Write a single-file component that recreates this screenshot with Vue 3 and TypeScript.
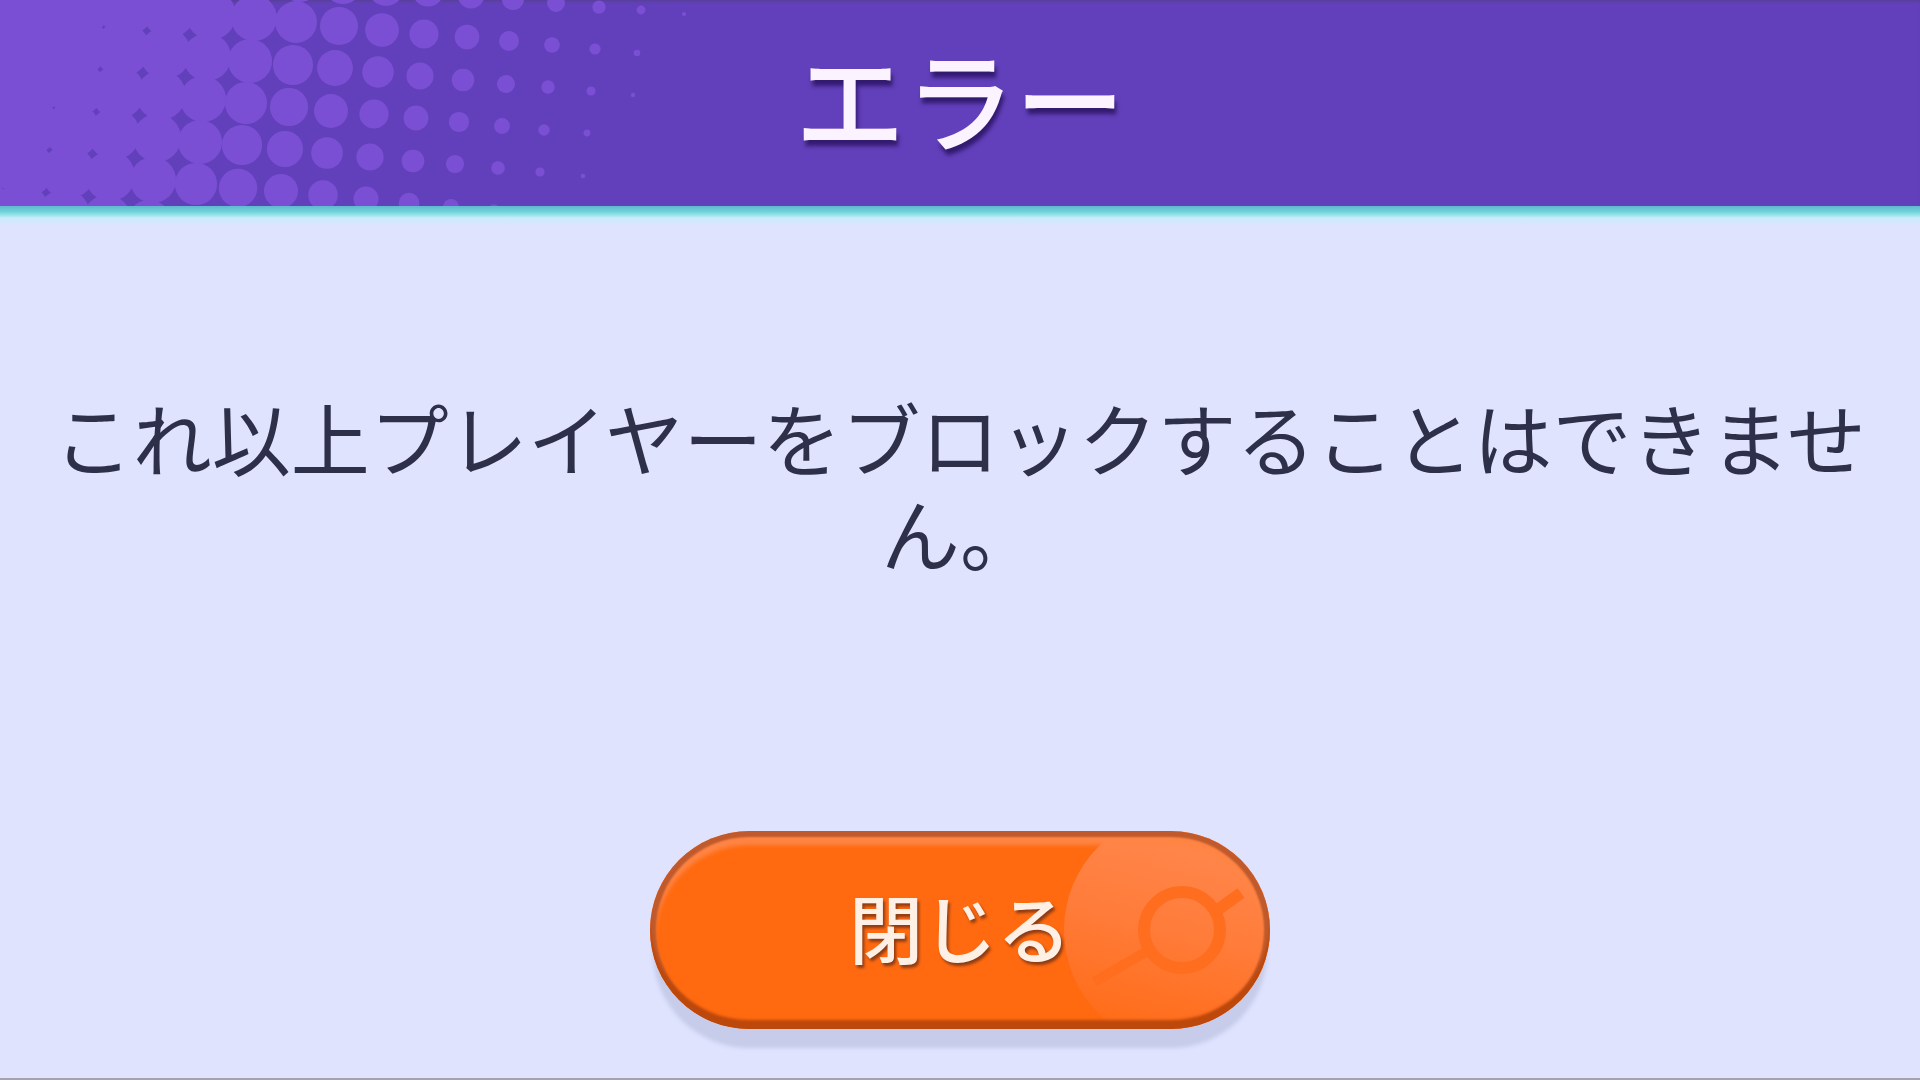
<script setup lang="ts">
import { ref } from 'vue'

interface Dot {
  x: number
  y: number
  r: number
}

const open = ref(true)

// Halftone: a slightly rotated square lattice whose dots shrink towards the right.
const dots: Dot[] = []
for (let j = -2; j <= 5; j++) {
  for (let i = -9; i <= 8; i++) {
    const x = 339 + i * 42.6 - j * 3.9
    const y = 26 + i * 3.8 + j * 42.3
    const t = x + 0.6 * y
    const r = t < 355 ? Math.min(32, 19 + (355 - t) * 0.043) : 19 - (t - 355) * 0.05
    if (r > 2) dots.push({ x: Math.round(x), y: Math.round(y), r: Math.round(r * 10) / 10 })
  }
}
</script>

<template>
  <main v-if="open" class="dialog" role="alertdialog" aria-labelledby="dialog-title" aria-describedby="dialog-message">
    <header class="dialog-header">
      <svg class="halftone" width="700" height="206" viewBox="0 0 700 206" aria-hidden="true">
        <circle v-for="(d, n) in dots" :key="n" :cx="d.x" :cy="d.y" :r="d.r" />
      </svg>
      <h1 id="dialog-title" class="title">エラー</h1>
    </header>
    <section class="dialog-body">
      <p id="dialog-message" class="message">これ以上プレイヤーをブロックすることはできません。</p>
      <button class="close" type="button" @click="open = false">
        <svg class="emblem" width="240" height="198" viewBox="0 0 240 198" aria-hidden="true">
          <defs>
            <linearGradient id="disc" x1="0.6" y1="0" x2="0.35" y2="1">
              <stop offset="0" stop-color="#ff8a52" />
              <stop offset="0.5" stop-color="#ff7c3a" />
              <stop offset="0.95" stop-color="#ff6c18" />
            </linearGradient>
          </defs>
          <circle cx="152" cy="99" r="118" fill="url(#disc)" />
          <g fill="none" stroke="#ff6d1e">
            <circle cx="152" cy="99" r="38" stroke-width="12" />
            <path d="M119 119 L64 151" stroke-width="10" />
            <path d="M186 80 L211 62" stroke-width="12" />
          </g>
        </svg>
        <span class="close-label">閉じる</span>
      </button>
    </section>
  </main>
</template>

<style>
body {
  margin: 0;
  background: #dfe3fe;
}
</style>

<style scoped>
.dialog {
  display: flex;
  flex-direction: column;
  box-sizing: border-box;
  min-height: 100vh;
  border-bottom: 2px solid #a3a2ae;
  background: #dfe3fe;
  font-family: "Noto Sans CJK JP", sans-serif;
}

.dialog-header {
  position: relative;
  display: flex;
  align-items: flex-start;
  justify-content: center;
  height: 206px;
  overflow: hidden;
  background: #6340bb;
  box-shadow: inset 0 2px 2px #5a419c;
}

.halftone {
  position: absolute;
  top: 0;
  left: 0;
  fill: #7b4fd3;
}

.title {
  position: relative;
  margin: 16px 0 0;
  color: #fbf3ff;
  font-size: 110px;
  font-weight: 500;
  line-height: 160px;
  text-shadow: 2px 6px 4px #321a70;
}

.dialog-body {
  display: flex;
  flex: 1;
  flex-direction: column;
  align-items: center;
  justify-content: space-between;
  padding: 183px 48px 49px;
  background: linear-gradient(#5fb9cf, #6fd6d8 6px, #c9ecfc 12px, #dfe3fe 20px);
}

.message {
  margin: 0;
  color: #2d3048;
  font-size: 79px;
  line-height: 95px;
  text-align: center;
}

.close {
  position: relative;
  width: 620px;
  height: 198px;
  padding: 0 0 8px;
  overflow: hidden;
  border: 0;
  border-radius: 99px;
  background: #ff6a10;
  box-shadow: 0 22px 4px -3px #c6cce9;
  color: #fff0e6;
  font-family: inherit;
  font-size: 74px;
  font-weight: 500;
  line-height: 104px;
  cursor: pointer;
}

.close::after {
  position: absolute;
  inset: 0;
  border-radius: 99px;
  box-shadow:
    inset 0 -9px 3px #bd480b,
    inset 0 0 2px 6px #c05a2c,
    inset 0 9px 4px 5px #ff8545;
  content: "";
}

.emblem {
  position: absolute;
  top: 0;
  right: 0;
}

.close-label {
  position: relative;
  text-shadow: 2px 3px 3px #8d3b14;
}
</style>
